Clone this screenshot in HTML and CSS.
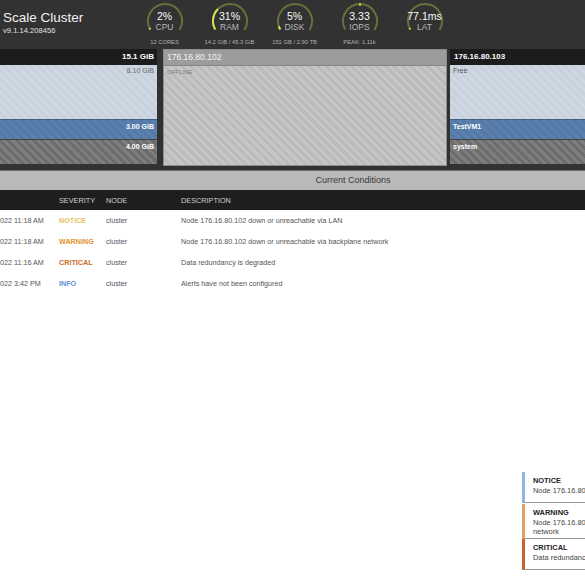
FILE: index.html
```html
<!DOCTYPE html>
<html lang="en">
<head>
    <meta charset="UTF-8">
    <title>Scale Cluster</title>
    <link rel="stylesheet" href="styles.css">
</head>
<body>
<div class="page">
    <div class="dash">
        <header class="topbar">
            <div class="brand">
                <h1>Scale Cluster</h1>
                <div class="ver">v9.1.14.208456</div>
            </div>
            <div class="gauges">
                <div class="gauge">
                    <div class="dial">
                        <svg viewBox="0 0 40 36" width="40" height="36">
                            <circle class="track" cx="20" cy="19" r="17" transform="rotate(150 20 19)"></circle>
                            <circle class="fill" cx="20" cy="19" r="17" stroke-dasharray="1.6 200" transform="rotate(150 20 19)"></circle>
                        </svg>
                        <div class="readout"><span class="val">2%</span><span class="lbl">CPU</span></div>
                    </div>
                    <div class="sub">12 CORES</div>
                </div>
                <div class="gauge">
                    <div class="dial">
                        <svg viewBox="0 0 40 36" width="40" height="36">
                            <circle class="track" cx="20" cy="19" r="17" transform="rotate(150 20 19)"></circle>
                            <circle class="fill" cx="20" cy="19" r="17" stroke-dasharray="22 200" transform="rotate(150 20 19)"></circle>
                        </svg>
                        <div class="readout"><span class="val">31%</span><span class="lbl">RAM</span></div>
                    </div>
                    <div class="sub">14.2 GiB / 45.3 GiB</div>
                </div>
                <div class="gauge">
                    <div class="dial">
                        <svg viewBox="0 0 40 36" width="40" height="36">
                            <circle class="track" cx="20" cy="19" r="17" transform="rotate(150 20 19)"></circle>
                            <circle class="fill" cx="20" cy="19" r="17" stroke-dasharray="3.6 200" transform="rotate(150 20 19)"></circle>
                        </svg>
                        <div class="readout"><span class="val">5%</span><span class="lbl">DISK</span></div>
                    </div>
                    <div class="sub">151 GB / 2.90 TB</div>
                </div>
                <div class="gauge">
                    <div class="dial">
                        <svg viewBox="0 0 40 36" width="40" height="36">
                            <circle class="track" cx="20" cy="19" r="17" transform="rotate(150 20 19)"></circle>
                            <line class="peak" x1="20" y1="1" x2="20" y2="4"></line>
                        </svg>
                        <div class="readout"><span class="val">3.33</span><span class="lbl">IOPS</span></div>
                    </div>
                    <div class="sub">PEAK: 1.11k</div>
                </div>
                <div class="gauge">
                    <div class="dial">
                        <svg viewBox="0 0 40 36" width="40" height="36">
                            <circle class="track" cx="20" cy="19" r="17" transform="rotate(150 20 19)"></circle>
                            <circle class="fill" cx="20" cy="19" r="17" stroke-dasharray="1.6 200" transform="rotate(150 20 19)"></circle>
                        </svg>
                        <div class="readout"><span class="val">77.1ms</span><span class="lbl">LAT</span></div>
                    </div>
                    <div class="sub"></div>
                </div>
            </div>
        </header>

        <section class="nodes">
            <div class="node node-left">
                <div class="node-head right">15.1 GiB</div>
                <div class="seg seg-free right muted">8.10 GiB</div>
                <div class="seg seg-vm right">3.00 GiB</div>
                <div class="seg seg-sys right">4.00 GiB</div>
            </div>
            <div class="node node-off">
                <div class="node-head">176.16.80.102</div>
                <div class="off-body">OFFLINE</div>
            </div>
            <div class="node node-right">
                <div class="node-head">176.16.80.103</div>
                <div class="seg seg-free">Free</div>
                <div class="seg seg-vm">TestVM1</div>
                <div class="seg seg-sys">system</div>
            </div>
        </section>
    </div>

    <div class="cond-bar">Current Conditions</div>

    <div class="alerts">
        <div class="row head">
            <span></span><span>Severity</span><span>Node</span><span>Description</span>
        </div>
        <div class="row">
            <span>022 11:18 AM</span><span class="sev notice">NOTICE</span><span>cluster</span><span>Node 176.16.80.102 down or unreachable via LAN</span>
        </div>
        <div class="row">
            <span>022 11:18 AM</span><span class="sev warning">WARNING</span><span>cluster</span><span>Node 176.16.80.102 down or unreachable via backplane network</span>
        </div>
        <div class="row">
            <span>022 11:16 AM</span><span class="sev critical">CRITICAL</span><span>cluster</span><span>Data redundancy is degraded</span>
        </div>
        <div class="row">
            <span>022 3:42 PM</span><span class="sev info">INFO</span><span>cluster</span><span>Alerts have not been configured</span>
        </div>
    </div>

    <!-- notification stack, floats over the page -->
    <div class="toasts">
        <div class="toast t-notice">
            <div class="t-title">NOTICE</div>
            <div class="t-body">Node 176.16.80.102 down or unreachable via LAN</div>
        </div>
        <div class="toast t-warning">
            <div class="t-title">WARNING</div>
            <div class="t-body">Node 176.16.80.102 down or unreachable via backplane network</div>
        </div>
        <div class="toast t-critical">
            <div class="t-title">CRITICAL</div>
            <div class="t-body">Data redundancy is degraded</div>
        </div>
    </div>
</div>
</body>
</html>
```

FILE: styles.css
```css
html, body {
    margin: 0;
    padding: 0;
    background: #fff;
    font-family: "Liberation Sans", Arial, sans-serif;
}
.page {
    position: relative;
    width: 585px;
    height: 585px;
    overflow: hidden;
}
.dash {
    background: #323232;
}

/* top bar */
.topbar {
    display: flex;
    height: 48px;
}
.brand {
    width: 128px;
    padding-left: 3px;
    padding-top: 10px;
}
.brand h1 {
    margin: 0;
    font-size: 13.5px;
    font-weight: normal;
    line-height: 15px;
    color: #f0f0f0;
}
.ver {
    font-size: 7.6px;
    line-height: 9px;
    color: #e0e0e0;
    margin-top: 1px;
}
.gauges {
    display: flex;
    padding-left: 1px;
}
.gauge {
    width: 65px;
    display: flex;
    flex-direction: column;
    align-items: center;
    padding-top: 2px;
}
.dial {
    display: grid;
    width: 40px;
    height: 36px;
}
.dial svg, .dial .readout {
    grid-area: 1 / 1;
}
.track, .fill {
    fill: none;
    stroke-width: 2;
}
.track {
    stroke: #66703a;
    stroke-dasharray: 71.2 200;
}
.fill {
    stroke: #d9e04c;
}
.peak {
    stroke: #d9e04c;
    stroke-width: 1.5;
}
.readout {
    display: flex;
    flex-direction: column;
    align-items: center;
    padding-top: 9px;
}
.val {
    font-size: 10.5px;
    line-height: 11px;
    color: #fafafa;
}
.lbl {
    font-size: 8.5px;
    line-height: 10px;
    color: #b8b8b8;
}
.sub {
    font-size: 5.8px;
    line-height: 8px;
    color: #b0b0b0;
    white-space: nowrap;
}

/* node panels */
.nodes {
    display: grid;
    grid-template-columns: 157px 287px 1fr;
    column-gap: 3px;
    padding: 1px 0 6px;
}
.node-head {
    height: 16px;
    line-height: 16px;
    font-size: 8px;
    font-weight: bold;
    color: #fff;
    background: #1c1c1c;
    padding: 0 3px;
}
.right {
    text-align: right;
}
.seg {
    font-size: 7px;
    padding: 2px 3px 0;
    box-sizing: border-box;
    color: #fff;
    font-weight: bold;
}
.seg-free {
    height: 54px;
    background: repeating-linear-gradient(45deg, #cfd8e2 0 3px, #c8d2dd 3px 6px);
    color: #555;
    font-weight: normal;
}
.seg-vm {
    height: 20px;
    background: repeating-linear-gradient(45deg, #5a80ae 0 3px, #5579a6 3px 6px);
    border-top: 1px solid #3f5f88;
    padding-top: 3px;
}
.seg-sys {
    height: 25px;
    background: repeating-linear-gradient(45deg, #7d7d7d 0 3px, #6c6c6c 3px 6px);
    border-top: 1px solid #444;
    padding-top: 3px;
}
.muted {
    color: #6a6a6a;
}
.node-off {
    margin-left: 3px;
    border: 1px solid #8c8c8c;
    display: flex;
    flex-direction: column;
    margin-bottom: -2px;
}
.node-off .node-head {
    background: #9c9c9c;
    font-weight: normal;
    font-size: 8.5px;
    color: #f4f4f4;
    height: 15px;
    line-height: 15px;
    border-bottom: 1px solid #858585;
}
.off-body {
    flex: 1;
    background: repeating-linear-gradient(45deg, #c6c6c6 0 3px, #bbbbbb 3px 6px);
    font-size: 6px;
    color: #7a7a7a;
    padding: 3px 3px 0;
}
.node-right .node-head {
    padding-left: 4px;
}

/* conditions */
.cond-bar {
    height: 19px;
    line-height: 19px;
    background: #b9b9b9;
    border-top: 1px solid #6a6a6a;
    font-size: 9px;
    color: #3a3a3a;
    text-align: center;
    padding-left: 121px;
}
.alerts {
    font-size: 7.2px;
    color: #555;
}
.row {
    display: grid;
    grid-template-columns: 59px 47px 75px 1fr;
    height: 21px;
    align-items: center;
    white-space: nowrap;
}
.row.head {
    height: 20px;
    background: #1e1e1e;
    color: #d0d0d0;
    text-transform: uppercase;
    font-size: 7.3px;
}
.sev {
    font-weight: bold;
}
.notice { color: #e8c25c; }
.warning { color: #e0922e; }
.critical { color: #cc6a2a; }
.info { color: #5e90d4; }

/* toasts */
.toasts {
    position: absolute;
    left: 522px;
    top: 472px;
    width: 222px;
}
.toast {
    min-height: 31px;
    box-sizing: border-box;
    background: #fff;
    border-left: 3px solid #8db7e2;
    border-bottom: 1px solid #9a9a9a;
    padding: 4px 8px 2px;
    font-size: 7.4px;
}
.t-warning { border-left-color: #e3a062; margin-top: 1px; min-height: 34px; }
.t-critical { border-left-color: #c9622c; }
.t-title {
    font-weight: bold;
    color: #222;
    line-height: 10px;
}
.t-body {
    color: #444;
    line-height: 9px;
}
```
